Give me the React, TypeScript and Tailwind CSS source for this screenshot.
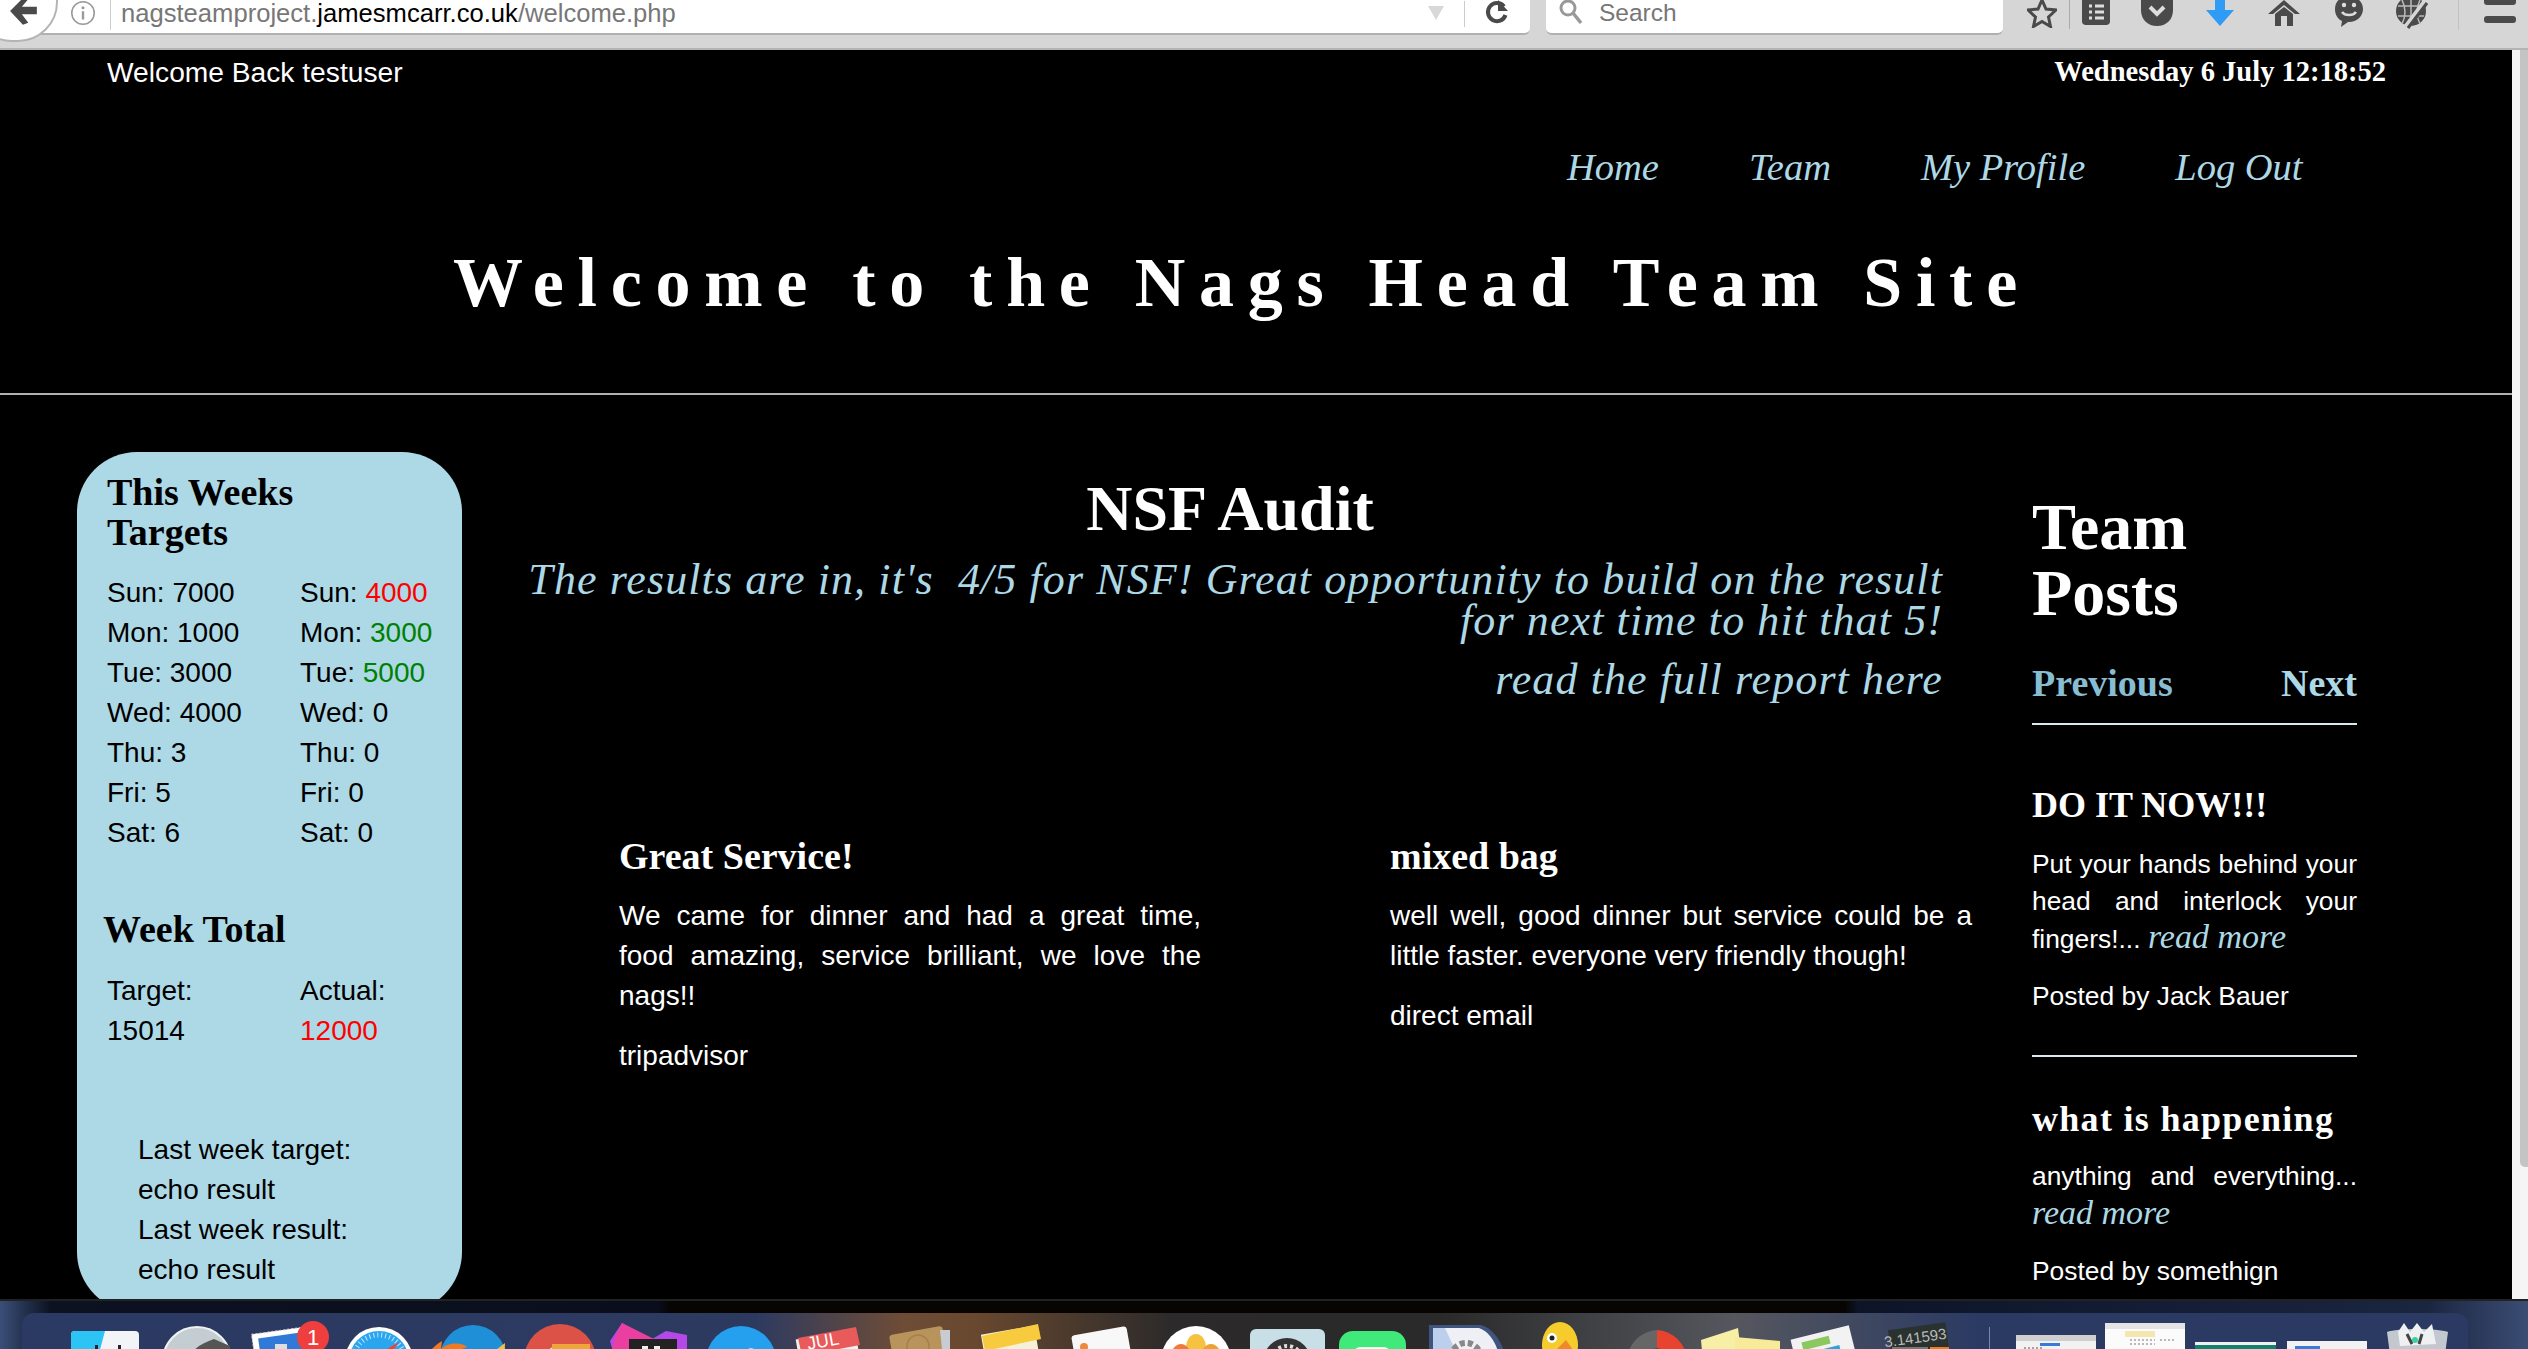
import React from "react";

const Serif = "font-['Liberation_Serif',serif]";

function Toolbar() {
  return (
    <div className="relative h-[50px] shrink-0 bg-[#d6d6d6] border-b-2 border-b-[#b4b4b4] flex items-start font-['Liberation_Sans',sans-serif]">
      <div className="w-[1530px] h-[35px] bg-white border-b-2 border-b-[#b0b0b0] rounded-br-[6px] flex items-center overflow-hidden">
        <svg width="26" height="26" viewBox="0 0 22 22" className="ml-[70px] mt-[-8px] shrink-0">
          <circle cx="11" cy="11" r="9.5" fill="none" stroke="#999" strokeWidth="1.3" />
          <circle cx="11" cy="6.5" r="1.3" fill="#999" />
          <rect x="10" y="9.5" width="2" height="7" fill="#999" />
        </svg>
        <div className="ml-[14px] w-px h-[30px] bg-[#ccc] mt-[-4px]" />
        <div className="ml-[10px] text-[25.6px] leading-[26px] text-[#777] mt-[-8px]">
          nagsteamproject.<span className="text-black">jamesmcarr.co.uk</span>/welcome.php
        </div>
        <svg width="18" height="16" viewBox="0 0 18 16" className="ml-[751px] mt-[-8px] shrink-0">
          <path d="M1 1h16L9 15z" fill="#d8d8d8" />
        </svg>
        <div className="ml-[19px] w-px h-[26px] bg-[#ccc] mt-[-6px]" />
        <svg width="26" height="26" viewBox="0 0 26 26" className="ml-[19px] mt-[-10px] shrink-0">
          <path d="M20 7.5A9 9 0 1 0 21.5 16" fill="none" stroke="#4a4a4a" strokeWidth="4" />
          <path d="M14 1v11h10z" fill="#4a4a4a" />
        </svg>
      </div>
      <div className="ml-[16px] w-[457px] h-[35px] bg-white border-b-2 border-b-[#b0b0b0] rounded-b-[6px] flex items-center">
        <svg width="26" height="26" viewBox="0 0 26 26" className="ml-[12px] mt-[-8px] shrink-0">
          <circle cx="10" cy="8" r="7" fill="none" stroke="#999" strokeWidth="3" />
          <path d="M15 13l8 10" stroke="#999" strokeWidth="3.5" />
        </svg>
        <span className="ml-[15px] mt-[-8px] text-[24.5px] leading-[26px] text-[#777]">Search</span>
      </div>
      <div className="flex items-start h-[30px] overflow-hidden">
        <svg width="30" height="30" viewBox="0 0 30 30" className="ml-[24px] mt-[-2px] shrink-0">
          <path d="M15 2l4 9 10 1-7.5 7 2 9.5L15 23.5 6.500 28.500l2-9.500L1 12l10-1z" fill="none" stroke="#4a4a4a" strokeWidth="3" />
        </svg>
        <div className="ml-[12px] w-px h-[29px] bg-[#aaa]" />
        <svg width="30" height="28" viewBox="0 0 30 28" className="ml-[11px] shrink-0">
          <rect x="1" y="-4" width="28" height="29" rx="4" fill="#4a4a4a" />
          <path d="M8 6h3M14 6h9M8 12h3M14 12h9M8 18h3M14 18h9" stroke="#ddd" strokeWidth="3" />
        </svg>
        <svg width="34" height="28" viewBox="0 0 34 28" className="ml-[29px] shrink-0">
          <path d="M1-6h32v16C33 20 26 26 17 26S1 20 1 10z" fill="#4a4a4a" />
          <path d="M10 7l7 7 7-7" fill="none" stroke="#ddd" strokeWidth="4" />
        </svg>
        <svg width="30" height="28" viewBox="0 0 30 28" className="ml-[31px] shrink-0">
          <path d="M10-4h10v14h9L15 26 1 10h9z" fill="#2e9bf5" />
        </svg>
        <svg width="34" height="28" viewBox="0 0 34 28" className="ml-[32px] shrink-0">
          <path d="M17 0L1 14h5L17 5l11 9h5zM8 14l9-7 9 7v12h-6V16h-6v10H8z" fill="#4a4a4a" />
        </svg>
        <svg width="30" height="28" viewBox="0 0 30 28" className="ml-[33px] shrink-0">
          <path d="M15-4C6-4 1 2 1 9c0 6 3 10 7 12l-1 6 7-5h1c8 0 14-6 14-13S23-4 15-4z" fill="#4a4a4a" />
          <circle cx="10" cy="5" r="2.200" fill="#ddd" />
          <circle cx="20" cy="5" r="2.200" fill="#ddd" />
          <path d="M8 12c3 4 11 4 14 0" fill="none" stroke="#ddd" strokeWidth="2.500" />
        </svg>
        <svg width="34" height="30" viewBox="0 0 34 30" className="ml-[32px] shrink-0">
          <circle cx="15" cy="11" r="15" fill="#4a4a4a" />
          <path d="M2 6h26M2 16h26M15-4v30M6 0c4 8 4 16 0 24M24 0c-4 8-4 16 0 24" fill="none" stroke="#bbb" strokeWidth="1.500" />
          <path d="M30 0L9 28" stroke="#d6d6d6" strokeWidth="5" />
          <path d="M31 3L12 28" stroke="#4a4a4a" strokeWidth="3" />
        </svg>
        <div className="ml-[28px] w-px h-[30px] bg-[#c2c2c2]" />
        <svg width="32" height="26" viewBox="0 0 32 26" className="ml-[25px] shrink-0">
          <rect x="0" y="-3" width="32" height="8" rx="3" fill="#4a4a4a" />
          <rect x="0" y="16" width="32" height="7" rx="3" fill="#4a4a4a" />
        </svg>
      </div>
      <div className="absolute left-[-28px] top-[-38px] w-[86px] h-[80px] rounded-full bg-white border-2 border-[#b4b4b4] flex items-center justify-center">
        <svg width="30" height="30" viewBox="0 0 28 28" className="ml-[18px] mt-[20px]">
          <path d="M13 1L1 13l12 13 5-2-6-8h14v-7H12l6-7z" fill="#4a4a4a" />
        </svg>
      </div>
    </div>
  );
}

function H({ className = "", children }: { className?: string; children: React.ReactNode }) {
  return <div className={`${Serif} font-bold ${className}`}>{children}</div>;
}

const more = `${Serif} italic text-[#add8e6] text-[34px]`;

function Sidebar() {
  const left = ["Sun: 7000", "Mon: 1000", "Tue: 3000", "Wed: 4000", "Thu: 3", "Fri: 5", "Sat: 6"];
  const right: [string, string, string][] = [
    ["Sun: ", "4000", "text-[#ff0000]"],
    ["Mon: ", "3000", "text-[#008000]"],
    ["Tue: ", "5000", "text-[#008000]"],
    ["Wed: ", "0", ""],
    ["Thu: ", "0", ""],
    ["Fri: ", "0", ""],
    ["Sat: ", "0", ""],
  ];
  return (
    <aside className="ml-[77px] w-[385px] h-[860px] shrink-0 rounded-[60px] bg-[#add8e6] text-black pl-[30px] pt-[20px] text-[28px] leading-[40px]">
      <H className="text-[38px] leading-[40px]">This Weeks<br />Targets</H>
      <div className="mt-[21px] grid grid-cols-[193px_1fr]">
        <div>{left.map((t) => <div key={t}>{t}</div>)}</div>
        <div>
          {right.map(([a, b, c]) => (
            <div key={a}>{a}<span className={c}>{b}</span></div>
          ))}
        </div>
      </div>
      <H className="mt-[56px] ml-[-4px] text-[38px] leading-[40px]">Week Total</H>
      <div className="mt-[22px] grid grid-cols-[193px_1fr]">
        <div>Target:<br />15014</div>
        <div>Actual:<br /><span className="text-[#ff0000]">12000</span></div>
      </div>
      <div className="mt-[79px] ml-[31px]">
        Last week target:<br />echo result<br />Last week result:<br />echo result
      </div>
    </aside>
  );
}

function Center() {
  return (
    <section className="ml-[65px] w-[1416px] shrink-0 text-white">
      <H className="text-center pr-[10px] text-[64px] leading-[70px] mt-[22px]">NSF Audit</H>
      <p className={`${Serif} italic text-[#add8e6] text-right text-[44px] tracking-[1.1px] leading-[41px] mt-[15px]`}>
        The results are in, it's&nbsp; 4/5 for NSF! Great opportunity to build on the result<br />for next time to hit that 5!
      </p>
      <p className={`${Serif} italic text-[#add8e6] text-right text-[44px] tracking-[1.1px] leading-[41px] mt-[18px]`}>read the full report here</p>
      <div className="mt-[136px] pl-[92px] grid grid-cols-[582px_582px] gap-x-[189px] text-[28px] leading-[40px]">
        <div>
          <H className="text-[38px] leading-[40px]">Great Service!</H>
          <p className="mt-[20px]">
            <span className="block [text-align-last:justify]">We came for dinner and had a great time,</span>
            <span className="block [text-align-last:justify]">food amazing, service brilliant, we love the</span>
            <span className="block">nags!!</span>
          </p>
          <p className="mt-[20px]">tripadvisor</p>
        </div>
        <div>
          <H className="text-[38px] leading-[40px]">mixed bag</H>
          <p className="mt-[20px] text-justify">well well, good dinner but service could be a little faster. everyone very friendly though!</p>
          <p className="mt-[20px]">direct email</p>
        </div>
      </div>
    </section>
  );
}

function Posts() {
  return (
    <section className="ml-[89px] w-[325px] shrink-0 text-white text-[26.4px] leading-[36.5px]">
      <H className="text-[66px] leading-[66px] mt-[42px]">Team<br />Posts</H>
      <div className="mt-[37px] flex justify-between border-b-2 border-b-[#d6eaf2] pb-[20px]">
        <H className="text-[38px] leading-[40px] text-[#87bdd3]">Previous</H>
        <H className="text-[38px] leading-[40px] text-[#add8e6]">Next</H>
      </div>
      <H className="mt-[58px] text-[36px] leading-[44px] ">DO IT NOW!!!</H>
      <p className="mt-[19px] text-justify">Put your hands behind your head and interlock your fingers!... <span className={more}>read more</span></p>
      <p className="mt-[20px]">Posted by Jack Bauer</p>
      <div className="mt-[41px] h-[2px] bg-[#d6eaf2]" />
      <H className="mt-[40px] text-[36px] tracking-[1.3px] leading-[44px]">what is happening</H>
      <p className="mt-[17px] text-justify">anything and everything... <span className={more}>read more</span></p>
      <p className="mt-[20px]">Posted by somethign</p>
    </section>
  );
}

function DockIcons() {
  return (
    <svg width="2528" height="36" viewBox="0 1313 2528 36" className="block">
      {/* finder */}
      <rect x="71" y="1331" width="68" height="60" rx="4" fill="#f2f5f8" />
      <path d="M75 1331h30l-8 30H71v-26a4 4 0 0 1 4-4z" fill="#2bc4f5" />
      <rect x="95" y="1345" width="3" height="4" fill="#223" /><rect x="118" y="1345" width="3" height="4" fill="#223" />
      {/* launchpad */}
      <circle cx="197" cy="1361" r="34" fill="#c4ced2" stroke="#eef2f3" strokeWidth="2" />
      <path d="M230 1346l-16-7c-12 4-22 10-28 22h44z" fill="#555" />
      {/* mail */}
      <rect x="254" y="1330" width="60" height="50" fill="#fff" stroke="#ccc" strokeDasharray="2 2" transform="rotate(-8 284 1350)" />
      <rect x="260" y="1335" width="48" height="40" fill="#2f7ad8" transform="rotate(-8 284 1350)" />
      <rect x="275" y="1344" width="12" height="6" fill="#ddd" />
      <ellipse cx="313" cy="1337" rx="16" ry="16" fill="#ee3e3e" />
      <text x="313" y="1345" fontSize="22" textAnchor="middle" fill="#fff" fontFamily="Liberation Sans, sans-serif">1</text>
      {/* safari */}
      <circle cx="379" cy="1361" r="34" fill="#fff" />
      <circle cx="379" cy="1361" r="30" fill="#2aa6f0" />
      <circle cx="379" cy="1361" r="26" fill="none" stroke="#bfe6ff" strokeWidth="5" strokeDasharray="1 3" />
      <path d="M399 1342l-24 14 8 8z" fill="#f04434" />
      {/* firefox */}
      <circle cx="473" cy="1358" r="33" fill="#1f8fd8" />
      <path d="M505 1343l-1 30-12-20z" fill="#f5c33b" />
      <path d="M432 1349c6-6 10-8 10-8l-1 8c8-8 22-6 26-2l-10 4c-6 4-4 14 6 16l-4 20h-28c-8-14-6-28 1-38z" fill="#ee7a24" />
      {/* chrome */}
      <circle cx="560" cy="1360" r="36" fill="#dc5246" />
      <path d="M524 1360h36l-18 31c-12-7-18-18-18-31z" fill="#3aa757" />
      <circle cx="560" cy="1360" r="15" fill="#f0f0f0" />
      <rect x="552" y="1344" width="38" height="5" fill="#eea63a" />
      {/* phpstorm */}
      <path d="M622 1323l30 16 14-8 21 4 0 24h-72l-5-18z" fill="#b548e8" />
      <path d="M622 1323l32 16-18 10h-24l3-12z" fill="#ea3fa0" />
      <rect x="629" y="1339" width="48" height="20" fill="#222" />
      <path d="M642 1346h6v4h-6zM654 1346h6v4h-6z" fill="#eee" />
      {/* bird */}
      <circle cx="741" cy="1361" r="35" fill="#24a0ee" />
      <path d="M728 1349c5 3 10 3 14 2l6-2c3-2 7 0 8 2l-2 4z" fill="#e8f6ff" />
      {/* calendar */}
      <rect x="798" y="1334" width="60" height="50" fill="#f0f0f0" transform="rotate(-10 828 1350)" />
      <path d="M798 1338l58-11 4 18-58 11z" fill="#e95a5a" />
      <text x="824" y="1347" fontSize="18" textAnchor="middle" fill="#fff" fontFamily="Liberation Sans, sans-serif" transform="rotate(-10 824 1347)">JUL</text>
      {/* contacts */}
      <rect x="892" y="1330" width="54" height="50" rx="3" fill="#b8945c" transform="rotate(-10 920 1350)" />
      <path d="M940 1330l10 0v19h-8z" fill="#c7ccd2" />
      <circle cx="918" cy="1346" r="11" fill="none" stroke="#a5804a" strokeWidth="1.500" />
      {/* notes */}
      <rect x="984" y="1330" width="54" height="50" fill="#f5f1d8" transform="rotate(-10 1010 1350)" />
      <path d="M982 1336l56-12 3 15-56 12z" fill="#f8cb3e" />
      {/* reminders */}
      <rect x="1074" y="1331" width="56" height="50" rx="3" fill="#f8f8f8" transform="rotate(-10 1100 1350)" />
      <circle cx="1084" cy="1347" r="4" fill="#ec8a38" />
      {/* photos */}
      <circle cx="1196" cy="1361" r="35" fill="#fff" />
      <ellipse cx="1196" cy="1347" rx="10" ry="13" fill="#f5c340" />
      <ellipse cx="1181" cy="1357" rx="10" ry="13" fill="#ef7a3a" />
      <ellipse cx="1211" cy="1357" rx="10" ry="13" fill="#f0a030" />
      <ellipse cx="1188" cy="1368" rx="9" ry="10" fill="#e4483c" />
      {/* preferences */}
      <rect x="1250" y="1329" width="75" height="50" rx="6" fill="#c9dfe8" />
      <circle cx="1287" cy="1362" r="24" fill="#333" />
      <circle cx="1287" cy="1362" r="16" fill="none" stroke="#ddd" strokeWidth="4" strokeDasharray="3 3" />
      {/* messages */}
      <rect x="1339" y="1331" width="67" height="50" rx="14" fill="#3fea7a" />
      <rect x="1354" y="1347" width="36" height="12" rx="6" fill="#eafff0" />
      {/* preview */}
      <path d="M1429 1325h52c14 4 22 20 25 33H1429z" fill="#3f557f" />
      <path d="M1433 1328h46c12 4 18 18 21 30H1433z" fill="#eef0f6" />
      <path d="M1433 1328h12l14 30h-26z" fill="#bcd0ee" />
      <circle cx="1466" cy="1358" r="15" fill="none" stroke="#888" strokeWidth="6" strokeDasharray="5 3" />
      {/* duck */}
      <ellipse cx="1560" cy="1345" rx="18" ry="23" fill="#f6cc2d" />
      <path d="M1566 1340l14 20-16 12-8-22z" fill="#f08a28" />
      <circle cx="1552" cy="1338" r="5" fill="#fff" /><circle cx="1552" cy="1338" r="2.500" fill="#222" />
      {/* disk chart */}
      <path d="M1657 1330a32 32 0 0 1 30 30h-18a14 14 0 0 0-12-12z" fill="#e8432e" />
      <path d="M1657 1330a32 32 0 0 0-30 30h18a14 14 0 0 1 12-12z" fill="#666" />
      {/* stickies */}
      <path d="M1701 1340l37-12 3 24-38 10z" fill="#f7efa5" />
      <path d="M1735 1337l45 4v20h-45z" fill="#f7eb9a" />
      {/* numbers */}
      <rect x="1794" y="1332" width="60" height="40" fill="#f2f2f2" transform="rotate(-14 1824 1350)" />
      <rect x="1802" y="1339" width="28" height="8" fill="#8cc860" transform="rotate(-14 1816 1343)" />
      <rect x="1805" y="1349" width="36" height="10" fill="#2aa4dc" transform="rotate(-14 1824 1354)" />
      {/* calculator */}
      <rect x="1891" y="1326" width="58" height="40" fill="#2a3230" transform="rotate(-8 1920 1350)" />
      <text x="1916" y="1343" fontSize="15" textAnchor="middle" fill="#bbb" fontFamily="Liberation Sans, sans-serif" transform="rotate(-8 1916 1343)">3.141593</text>
      <rect x="1930" y="1347" width="19" height="10" fill="#ef7d1e" />
      <rect x="1892" y="1347" width="36" height="10" fill="#777" />
      {/* separator */}
      <rect x="1989" y="1327" width="1" height="22" fill="#7786a8" />
      {/* windows */}
      <rect x="2016" y="1335" width="80" height="20" fill="#f2f2f2" />
      <rect x="2016" y="1335" width="80" height="6" fill="#cfcfcf" />
      <rect x="2040" y="1343" width="20" height="3" fill="#3a7ad8" />
      <path d="M2024 1348h20M2024 1350h20" stroke="#555" strokeDasharray="2 2" />
      <rect x="2105" y="1323" width="80" height="30" fill="#fbfbfb" />
      <rect x="2105" y="1323" width="80" height="6" fill="#e4e4e4" />
      <rect x="2125" y="1331" width="30" height="6" fill="#f5e6b0" />
      <path d="M2130 1340h25M2130 1344h25M2160 1340h15" stroke="#777" strokeDasharray="2 2" />
      <rect x="2195" y="1342" width="81" height="10" fill="#f0f0f0" />
      <rect x="2195" y="1345" width="81" height="5" fill="#14806e" />
      <rect x="2287" y="1341" width="80" height="10" fill="#f2f2f2" />
      <rect x="2295" y="1346" width="25" height="3" fill="#3a7ad8" />
      {/* trash */}
      <path d="M2387 1332c10-4 50-4 61 0l-4 30h-53z" fill="#d4d8da" opacity=".9" />
      <path d="M2398 1332l6-9 6 9 7-9 7 9 8-8 4 20-36 2z" fill="#eef0f2" />
      <path d="M2407 1334l5 10M2422 1334l-3 10" stroke="#444" strokeWidth="3" />
      <circle cx="2415" cy="1340" r="3" fill="#3ad0a0" />
    </svg>
  );
}

export default function App() {
  return (
    <div className="h-screen w-full overflow-hidden flex flex-col bg-black font-['Liberation_Sans',sans-serif]">
      <Toolbar />
      <div className="flex-1 min-h-0 flex">
        <main className="flex-1 min-w-0 overflow-hidden text-white">
          <div className="flex justify-between h-[44px] items-center mt-[0px]">
            <div className="pl-[107px] text-[28.2px]">Welcome Back testuser</div>
            <H className="pr-[126px] text-[28.5px]">Wednesday 6 July 12:18:52</H>
          </div>
          <nav className={`${Serif} italic text-[#add8e6] text-[38.5px] leading-[40px] flex pl-[1567px] mt-[53px] gap-[90px]`}>
            <a>Home</a><a>Team</a><a>My Profile</a><a>Log Out</a>
          </nav>
          <H className="mt-[61px] pl-[453px] text-[70px] leading-[70px] tracking-[13.7px] whitespace-nowrap">Welcome to the Nags Head Team Site</H>
          <div className="mt-[75px] h-[2px] bg-[#b0b0b0]" />
          <div className="mt-[57px] flex items-start">
            <Sidebar />
            <Center />
            <Posts />
          </div>
        </main>
        <div className="w-[16px] shrink-0 bg-[#f5f5f5] flex justify-end">
          <div className="w-[8px] h-[1117px] bg-[#c4c4c4] rounded-bl-[5px]" />
        </div>
      </div>
      <footer className="h-[50px] shrink-0 border-t-2 border-t-[#222] bg-[linear-gradient(90deg,#3a4f78_0%,#0c1222_2%,#0a0e1c_26%,#070504_26.5%,#070504_73%,#0d1428_73.5%,#1a2540_96%,#3b4d74_100%)] pt-[12px] pl-[22px] pr-[60px]">
        <div className="h-[36px] rounded-t-[12px] bg-[linear-gradient(90deg,#2b3a63_0%,#2d3a60_30%,#6e4c36_36%,#68482f_39%,#2c2a2a_47%,#2a2a2a_58%,#55575e_70%,#2b3a63_80%,#2b3a63_100%)] overflow-hidden">
          <div className="ml-[-22px]">
            <DockIcons />
          </div>
        </div>
      </footer>
    </div>
  );
}
